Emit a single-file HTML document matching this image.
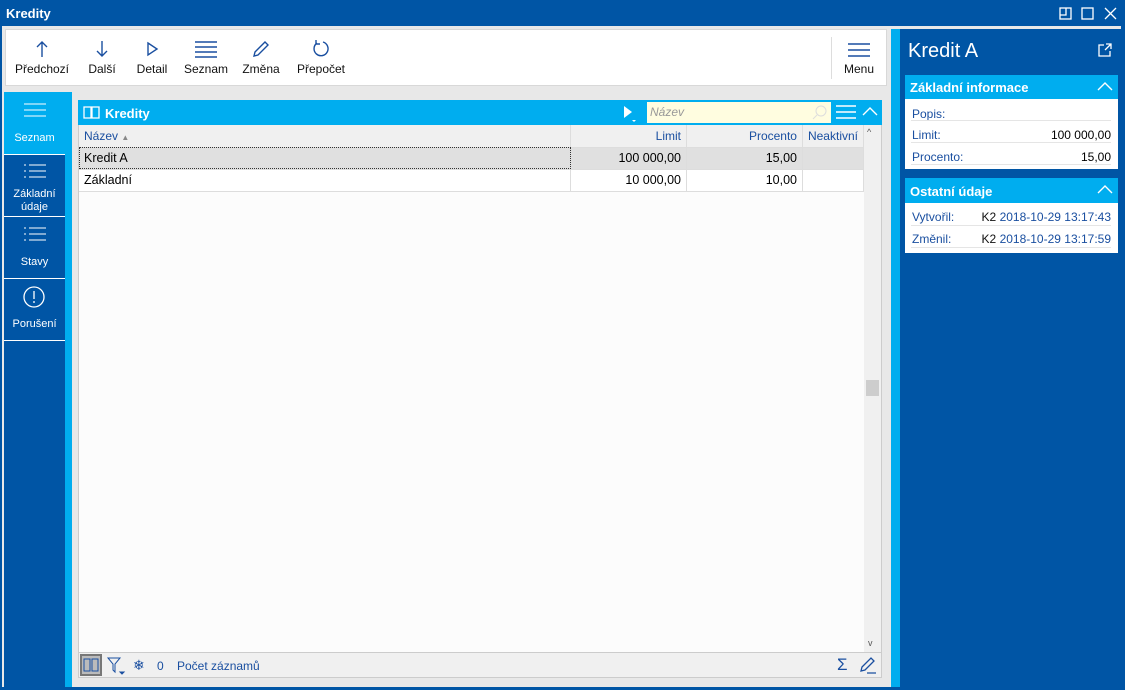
<!DOCTYPE html><html><head><meta charset="utf-8"><style>
*{box-sizing:border-box;margin:0;padding:0}
body{width:1125px;height:690px;overflow:hidden;background:#0055a5;font-family:"Liberation Sans",sans-serif;font-size:12px;position:relative}
.abs{position:absolute}
.title{left:6px;top:6px;color:#fff;font-weight:bold;font-size:13px}
.blue{color:#1a4fa0}
.tb{text-align:center;font-size:12px;color:#111}
.tb svg{display:block;margin:0 auto 4px}
.side{color:#fff;font-size:11px;text-align:center;width:61px}
.hdr{background:#00adef;color:#fff;font-weight:bold}
td{padding:0 5px;height:22px;border-right:1px solid #ddd;border-bottom:1px solid #ddd}
</style></head><body>
<div class="abs title">Kredity</div>
<svg class="abs" style="left:1058px;top:7px" width="60" height="14" fill="none" stroke="#fff" stroke-width="1.3"><rect x="2" y="1" width="11" height="11"/><path d="M2 8h6V1"/><rect x="24" y="1" width="11" height="11"/><path d="M47 1l11 11M58 1L47 12"/></svg>
<div class="abs" style="left:2px;top:26px;width:1119px;height:3px;background:#e8e8e8"></div>
<div class="abs" style="left:2px;top:26px;width:889px;height:661px;background:#e8e8e8"></div>
<div class="abs" style="left:5px;top:29px;width:882px;height:57px;background:#fff;border:1px solid #d8d8d8"></div>
<div class="abs tb" style="left:12px;top:40px;width:60px"><svg width="14" height="18" fill="none" stroke="#1a4fa0" stroke-width="1.4"><path d="M7 17V2M2 7l5-5 5 5"/></svg>Předchozí</div>
<div class="abs tb" style="left:82px;top:40px;width:40px"><svg width="14" height="18" fill="none" stroke="#1a4fa0" stroke-width="1.4"><path d="M7 1v15M2 11l5 5 5-5"/></svg>Další</div>
<div class="abs tb" style="left:132px;top:40px;width:40px"><svg width="14" height="18" fill="none" stroke="#1a4fa0" stroke-width="1.4"><path d="M3 3l9 6-9 6z"/></svg>Detail</div>
<div class="abs tb" style="left:182px;top:40px;width:48px"><svg width="22" height="18" fill="none" stroke="#1a4fa0" stroke-width="1.4"><path d="M0 2h22M0 7h22M0 12h22M0 17h22"/></svg>Seznam</div>
<div class="abs tb" style="left:238px;top:40px;width:46px"><svg width="18" height="18" fill="none" stroke="#1a4fa0" stroke-width="1.4"><path d="M2 16l1-4 10-10 3 3-10 10z"/></svg>Změna</div>
<div class="abs tb" style="left:294px;top:40px;width:54px"><svg width="18" height="18" fill="none" stroke="#1a4fa0" stroke-width="1.4"><path d="M5 3a7 7 0 1 0 6-1M4 0v4h4"/></svg>Přepočet</div>
<div class="abs" style="left:831px;top:37px;width:1px;height:42px;background:#ddd"></div>
<div class="abs tb" style="left:838px;top:42px;width:42px"><svg width="22" height="16" fill="none" stroke="#1a4fa0" stroke-width="1.4"><path d="M0 2h22M0 8h22M0 14h22"/></svg>Menu</div>
<div class="abs" style="left:4px;top:92px;width:61px;height:595px;background:#0055a5"></div>
<div class="abs" style="left:65px;top:92px;width:7px;height:595px;background:#00adef"></div>
<div class="abs" style="left:4px;top:92px;width:61px;height:62px;background:#00adef"></div>
<svg class="abs" style="left:24px;top:103px" width="22" height="14" stroke="#fff"><path d="M0 1h22M0 7h22M0 13h22"/></svg>
<div class="abs side" style="left:4px;top:132px">Seznam</div>
<div class="abs" style="left:4px;top:154px;width:61px;height:1px;background:#fff"></div>
<svg class="abs" style="left:24px;top:164px" width="22" height="14" stroke="#fff"><path d="M0 1h2M5 1h17M0 7h2M5 7h17M0 13h2M5 13h17"/></svg>
<div class="abs side" style="left:4px;top:188px;line-height:13px">Základní<br>údaje</div>
<div class="abs" style="left:4px;top:216px;width:61px;height:1px;background:#fff"></div>
<svg class="abs" style="left:24px;top:227px" width="22" height="14" stroke="#fff"><path d="M0 1h2M5 1h17M0 7h2M5 7h17M0 13h2M5 13h17"/></svg>
<div class="abs side" style="left:4px;top:256px">Stavy</div>
<div class="abs" style="left:4px;top:278px;width:61px;height:1px;background:#fff"></div>
<svg class="abs" style="left:23px;top:286px" width="22" height="22" fill="none" stroke="#fff" stroke-width="1.3"><circle cx="11" cy="11" r="10"/><path d="M11 5v8M11 15v2"/></svg>
<div class="abs side" style="left:4px;top:318px">Porušení</div>
<div class="abs" style="left:4px;top:340px;width:61px;height:1px;background:#fff"></div>
<div class="abs" style="left:78px;top:100px;width:804px;height:578px;background:#fcfcfc;border:1px solid #ccc"></div>
<div class="abs hdr" style="left:78px;top:100px;width:804px;height:25px"></div>
<svg class="abs" style="left:83px;top:105px" width="18" height="15" fill="none" stroke="#fff" stroke-width="1.3"><path d="M1 2h7v11H1zM9 2h7v11H9z"/></svg>
<div class="abs" style="left:105px;top:106px;color:#fff;font-weight:bold;font-size:13px">Kredity</div>
<svg class="abs" style="left:622px;top:105px" width="16" height="18" fill="#fff"><path d="M2 1l8 6-8 6z"/><path d="M10 15h4l-2 2z"/></svg>
<div class="abs" style="left:647px;top:102px;width:184px;height:21px;background:#fffde0;color:#999;font-style:italic;padding:3px 3px">Název</div>
<svg class="abs" style="left:812px;top:104px" width="16" height="16" fill="none" stroke="#ddd"><circle cx="9" cy="7" r="5"/><path d="M5 11l-4 4"/></svg>
<svg class="abs" style="left:836px;top:105px" width="20" height="14" stroke="#fff" stroke-width="1.4"><path d="M0 1h20M0 7h20M0 13h20"/></svg>
<svg class="abs" style="left:862px;top:107px" width="16" height="10" fill="none" stroke="#fff" stroke-width="1.4"><path d="M1 8l7-7 7 7"/></svg>
<table class="abs" style="left:79px;top:125px;width:785px;border-collapse:collapse;font-size:12.5px">
<tr style="background:#f0f0f0;color:#1a4fa0;font-size:12px"><td style="width:492px">Název <span style="color:#888;font-size:8px">▲</span></td><td style="width:116px;text-align:right">Limit</td><td style="width:116px;text-align:right">Procento</td><td style="text-align:right">Neaktivní</td></tr>
<tr style="background:#e0e0e0"><td style="outline:1px dotted #333;outline-offset:-1px">Kredit A</td><td style="text-align:right">100 000,00</td><td style="text-align:right">15,00</td><td></td></tr>
<tr style="background:#fff"><td>Základní</td><td style="text-align:right">10 000,00</td><td style="text-align:right">10,00</td><td></td></tr>
</table>
<div class="abs" style="left:864px;top:125px;width:17px;height:527px;background:#f0f0f0"></div>
<div class="abs" style="left:866px;top:380px;width:13px;height:16px;background:#cdcdcd"></div>
<div class="abs" style="left:867px;top:127px;font-size:9px;color:#555">^</div>
<div class="abs" style="left:868px;top:638px;font-size:9px;color:#555">v</div>
<div class="abs" style="left:79px;top:652px;width:802px;height:25px;background:#f0f0f0;border-top:1px solid #ccc"></div>
<div class="abs" style="left:80px;top:654px;width:22px;height:22px;background:#bbb;border:2px solid #777"></div>
<svg class="abs" style="left:83px;top:657px" width="16" height="16" fill="none" stroke="#1a4fa0"><path d="M1 2h6v12H1zM9 2h6v12H9z"/></svg>
<svg class="abs" style="left:106px;top:656px" width="20" height="20" fill="none" stroke="#1a4fa0"><path d="M2 2h12l-5 6v8l-2-2V8z"/><path d="M14 16h4l-2 2z" fill="#1a4fa0"/></svg>
<div class="abs blue" style="left:133px;top:657px;font-size:14px">❄</div>
<div class="abs blue" style="left:157px;top:659px">0</div>
<div class="abs blue" style="left:177px;top:659px">Počet záznamů</div>
<div class="abs blue" style="left:837px;top:655px;font-size:17px">Σ</div>
<svg class="abs" style="left:859px;top:656px" width="18" height="18" fill="none" stroke="#1a4fa0" stroke-width="1.3"><path d="M2 15l1-4 9-9 3 3-9 9zM8 17h9"/></svg>
<div class="abs" style="left:891px;top:29px;width:9px;height:658px;background:#00adef"></div>
<div class="abs" style="left:900px;top:29px;width:221px;height:658px;background:#0055a5"></div>
<div class="abs" style="left:908px;top:40px;color:#fff;font-size:20px">Kredit A</div>
<svg class="abs" style="left:1098px;top:43px" width="14" height="14" fill="none" stroke="#fff" stroke-width="1.3"><path d="M6 2H1v11h11V8M7 7l6-6M8 1h5v5"/></svg>
<div class="abs hdr" style="left:905px;top:75px;width:213px;height:24px;padding:5px 5px;font-size:13px">Základní informace</div>
<svg class="abs" style="left:1097px;top:82px" width="16" height="10" fill="none" stroke="#fff" stroke-width="1.4"><path d="M1 8l7-7 7 7"/></svg>
<div class="abs" style="left:905px;top:99px;width:213px;height:70px;background:#fff"></div>
<div class="abs blue" style="left:912px;top:107px">Popis:</div>
<div class="abs blue" style="left:912px;top:128px">Limit:</div><div class="abs" style="right:14px;top:128px">100 000,00</div>
<div class="abs blue" style="left:912px;top:150px">Procento:</div><div class="abs" style="right:14px;top:150px">15,00</div>
<div class="abs" style="left:911px;top:120px;width:200px;height:1px;background:#e5e5e5"></div>
<div class="abs" style="left:911px;top:142px;width:200px;height:1px;background:#e5e5e5"></div>
<div class="abs" style="left:911px;top:164px;width:200px;height:1px;background:#e5e5e5"></div>
<div class="abs hdr" style="left:905px;top:178px;width:213px;height:25px;padding:6px 5px;font-size:13px">Ostatní údaje</div>
<svg class="abs" style="left:1097px;top:185px" width="16" height="10" fill="none" stroke="#fff" stroke-width="1.4"><path d="M1 8l7-7 7 7"/></svg>
<div class="abs" style="left:905px;top:203px;width:213px;height:50px;background:#fff"></div>
<div class="abs blue" style="left:912px;top:210px">Vytvořil:</div><div class="abs blue" style="right:14px;top:210px"><span style="color:#111">K2</span> 2018-10-29 13:17:43</div>
<div class="abs blue" style="left:912px;top:232px">Změnil:</div><div class="abs blue" style="right:14px;top:232px"><span style="color:#111">K2</span> 2018-10-29 13:17:59</div>
<div class="abs" style="left:911px;top:225px;width:200px;height:1px;background:#e5e5e5"></div>
<div class="abs" style="left:911px;top:247px;width:200px;height:1px;background:#e5e5e5"></div>
</body></html>
